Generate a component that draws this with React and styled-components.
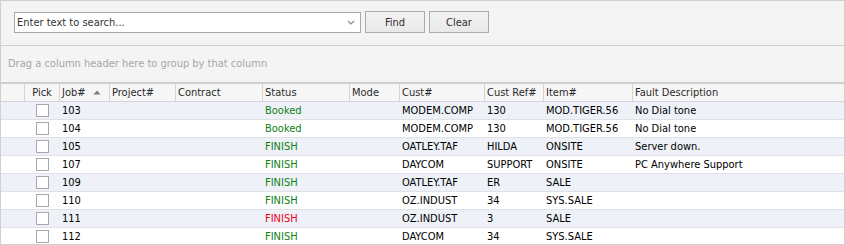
import React from 'react';
import styled, { createGlobalStyle } from 'styled-components';

const GlobalStyle = createGlobalStyle`
  body {
    margin: 0;
    background: #fff;
    font-family: 'DejaVu Sans Condensed', 'DejaVu Sans', sans-serif;
    font-stretch: condensed;
    font-size: 11px;
  }
`;

const columns = [
  { key: 'sel', title: '', width: 24 },
  { key: 'pick', title: 'Pick', width: 35, center: true },
  { key: 'job', title: 'Job#', width: 50, sorted: true },
  { key: 'project', title: 'Project#', width: 66 },
  { key: 'contract', title: 'Contract', width: 87 },
  { key: 'status', title: 'Status', width: 87 },
  { key: 'mode', title: 'Mode', width: 50 },
  { key: 'cust', title: 'Cust#', width: 85 },
  { key: 'ref', title: 'Cust Ref#', width: 59 },
  { key: 'item', title: 'Item#', width: 89 },
  { key: 'fault', title: 'Fault Description', width: 0 },
];

const rows = [
  { job: '103', status: 'Booked', cust: 'MODEM.COMP', ref: '130', item: 'MOD.TIGER.56', fault: 'No Dial tone' },
  { job: '104', status: 'Booked', cust: 'MODEM.COMP', ref: '130', item: 'MOD.TIGER.56', fault: 'No Dial tone' },
  { job: '105', status: 'FINISH', cust: 'OATLEY.TAF', ref: 'HILDA', item: 'ONSITE', fault: 'Server down.' },
  { job: '107', status: 'FINISH', cust: 'DAYCOM', ref: 'SUPPORT', item: 'ONSITE', fault: 'PC Anywhere Support' },
  { job: '109', status: 'FINISH', cust: 'OATLEY.TAF', ref: 'ER', item: 'SALE', fault: '' },
  { job: '110', status: 'FINISH', cust: 'OZ.INDUST', ref: '34', item: 'SYS.SALE', fault: '' },
  { job: '111', status: 'FINISH', cust: 'OZ.INDUST', ref: '3', item: 'SALE', fault: '', late: true },
  { job: '112', status: 'FINISH', cust: 'DAYCOM', ref: '34', item: 'SYS.SALE', fault: '' },
];

const template = columns.map((c) => (c.width ? `${c.width}px` : '1fr')).join(' ');

export default function App() {
  return (
    <>
      <GlobalStyle />
      <Frame>
        <SearchPanel>
          <SearchBox>
            <span>Enter text to search...</span>
            <svg width="8" height="5" viewBox="0 0 8 5">
              <path d="M1 1 L4 4 L7 1" fill="none" stroke="#8a8a8a" strokeWidth="1.2" />
            </svg>
          </SearchBox>
          <Button>Find</Button>
          <Button>Clear</Button>
        </SearchPanel>
        <GroupPanel>Drag a column header here to group by that column</GroupPanel>
        <HeaderRow>
          {columns.map((c) => (
            <HeaderCell key={c.key} $center={c.center}>
              {c.title}
              {c.sorted && (
                <svg width="8" height="5" viewBox="0 0 8 5">
                  <path d="M0.5 4.5 L4 0.5 L7.5 4.5 Z" fill="#7a7a7a" />
                </svg>
              )}
            </HeaderCell>
          ))}
        </HeaderRow>
        {rows.map((r, i) => (
          <Row key={r.job} $alt={i % 2 === 0}>
            <Cell />
            <Cell $center>
              <Check />
            </Cell>
            <Cell>{r.job}</Cell>
            <Cell />
            <Cell />
            <Status $late={r.late}>{r.status}</Status>
            <Cell />
            <Cell>{r.cust}</Cell>
            <Cell>{r.ref}</Cell>
            <Cell>{r.item}</Cell>
            <Cell>{r.fault}</Cell>
          </Row>
        ))}
      </Frame>
    </>
  );
}

const Frame = styled.div`
  width: 845px;
  height: 245px;
  box-sizing: border-box;
  border: 1px solid #d0d0d0;
  overflow: hidden;
  background: #fff;
  color: #000;
`;

const SearchPanel = styled.div`
  height: 45px;
  background: #f4f4f4;
  border-bottom: 1px solid #cfcfcf;
  display: flex;
  align-items: center;
  padding-left: 13px;
  gap: 4px;
  padding-bottom: 2px;
  box-sizing: border-box;
`;

const SearchBox = styled.div`
  width: 347px;
  height: 21px;
  box-sizing: border-box;
  border: 1px solid #a9a9a9;
  background: #fff;
  display: flex;
  align-items: center;
  justify-content: space-between;
  padding: 0 5px 0 2px;
  color: #333;
`;

const Button = styled.div`
  width: 60px;
  height: 22px;
  box-sizing: border-box;
  border: 1px solid #ababab;
  background: linear-gradient(#f2f2f2, #e9e9e9);
  display: flex;
  align-items: center;
  justify-content: center;
  color: #303030;
`;

const GroupPanel = styled.div`
  height: 34px;
  background: #f4f4f4;
  border-bottom: 2px solid #cfcfcf;
  display: flex;
  align-items: center;
  padding-left: 7px;
  padding-bottom: 2px;
  color: #a6a6a6;
`;

const HeaderRow = styled.div`
  display: grid;
  grid-template-columns: ${template};
  height: 18px;
  box-sizing: border-box;
  background: #f6f6f6;
  border-bottom: 1px solid #d4d4d4;
`;

const HeaderCell = styled.div`
  display: flex;
  align-items: center;
  justify-content: ${(p) => (p.$center ? 'center' : 'flex-start')};
  gap: 7px;
  padding-left: ${(p) => (p.$center ? '0' : '2px')};
  border-right: 1px solid #d4d4d4;
  color: #2a2a2a;
  white-space: nowrap;
  overflow: hidden;
  &:last-child {
    border-right: none;
  }
`;

const Row = styled.div`
  display: grid;
  grid-template-columns: ${template};
  height: 18px;
  box-sizing: border-box;
  background: ${(p) => (p.$alt ? '#eef2f8' : '#fff')};
  border-bottom: 1px solid #dfe1e4;
`;

const Cell = styled.div`
  display: flex;
  align-items: center;
  justify-content: ${(p) => (p.$center ? 'center' : 'flex-start')};
  padding-left: ${(p) => (p.$center ? '0' : '2px')};
  white-space: nowrap;
  overflow: hidden;
`;

const Status = styled(Cell)`
  color: ${(p) => (p.$late ? '#f0001c' : '#0e7f14')};
`;

const Check = styled.span`
  width: 13px;
  height: 13px;
  box-sizing: border-box;
  border: 1px solid #a8a8a8;
  background: #fff;
`;
